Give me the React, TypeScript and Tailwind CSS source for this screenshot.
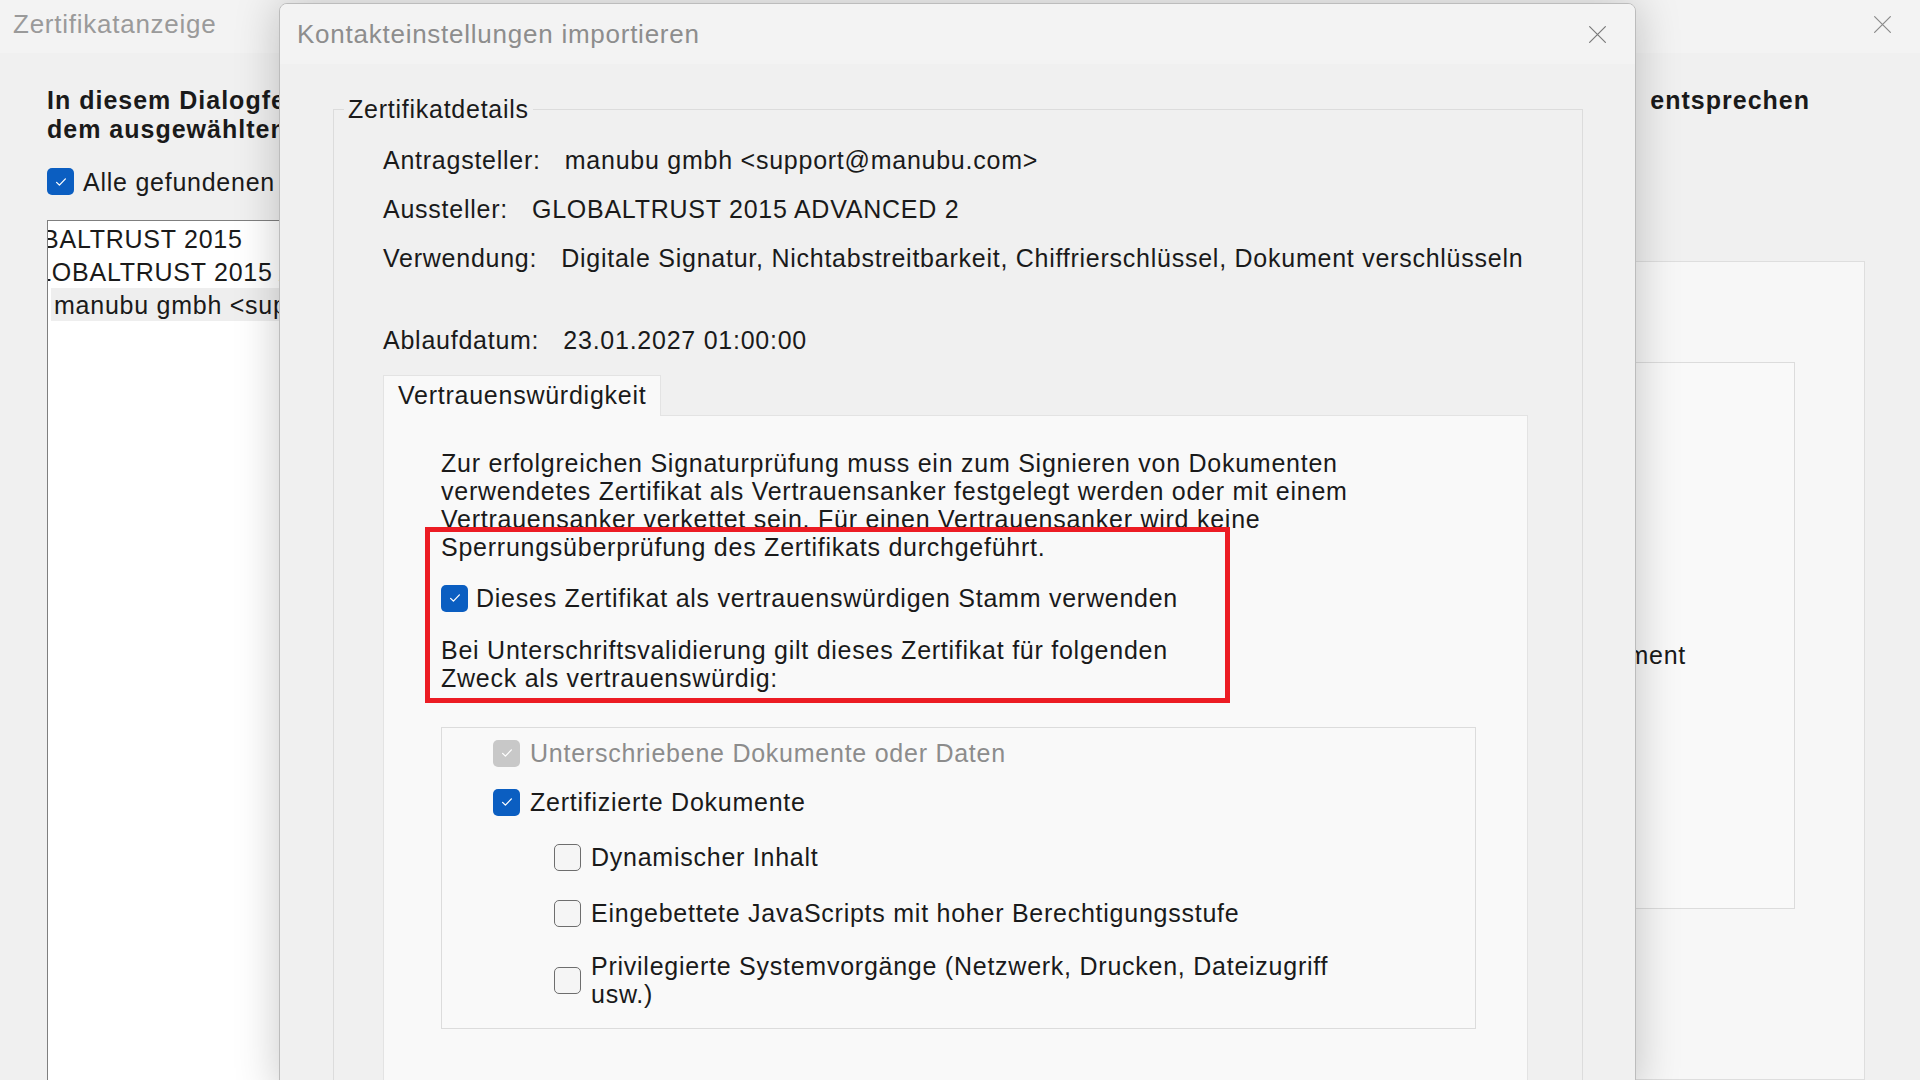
import React from 'react';

type CheckState = 'checked' | 'unchecked' | 'disabled';

function CloseIcon({ className }: { className?: string }) {
  return (
    <svg viewBox="0 0 24 24" className={className} fill="none">
      <path d="M3 3l18 18M21 3L3 21" stroke="currentColor" strokeWidth="1.4" strokeLinecap="round" />
    </svg>
  );
}

function Checkbox({ state }: { state: CheckState }) {
  if (state === 'unchecked') {
    return <span className="w-[27px] h-[27px] shrink-0 rounded-[5px] border-[1.5px] border-[#6e6e6e] bg-[#f5f5f5]" />;
  }
  const bg = state === 'checked' ? 'bg-[#0b5ec1]' : 'bg-[#c8c8c8]';
  return (
    <span className={`w-[27px] h-[27px] shrink-0 rounded-[5px] ${bg} flex items-center justify-center`}>
      <svg viewBox="0 0 16 16" className="w-[16px] h-[16px]" fill="none">
        <path d="M3.6 8.4l2.8 2.7 6-6.2" stroke="white" strokeWidth="1.3" strokeLinecap="round" strokeLinejoin="round" />
      </svg>
    </span>
  );
}

function CheckRow({ state, children, className = '' }: { state: CheckState; children: React.ReactNode; className?: string }) {
  return (
    <div className={`flex items-center gap-[10px] ${className}`}>
      <Checkbox state={state} />
      <span className={state === 'disabled' ? 'text-[#8c8c8c]' : ''}>{children}</span>
    </div>
  );
}

function DetailRow({ label, value, className = '' }: { label: string; value: string; className?: string }) {
  return (
    <div className={`flex gap-[24px] h-[28px] items-center ${className}`}>
      <span>{label}</span>
      <span>{value}</span>
    </div>
  );
}

export default function App() {
  return (
    <div className="relative w-[1920px] h-[1080px] overflow-hidden bg-[#f0f0f0] text-[#1a1a1a] [font-family:'Liberation_Sans',Arial,sans-serif] text-[25px] leading-[28px] tracking-[0.03em]">
      {/* Background window: Zertifikatanzeige */}
      <div className="flex flex-col h-full">
        <div className="h-[53px] shrink-0 bg-[#f3f3f3] flex items-center justify-between pl-[13px] pr-[27px] pb-[5px]">
          <span className="text-[26px] text-[#9a9a9a]">Zertifikatanzeige</span>
          <CloseIcon className="w-[21px] h-[21px] text-[#8a8a8a]" />
        </div>

        <div className="flex-1 flex flex-col pl-[47px] min-h-0">
          <div className="mt-[33px] font-bold text-[25px] leading-[29px] tracking-[0.04em]">
            <div className="flex justify-between w-[1763px]">
              <span>In diesem Dialogfeld können Sie die Zertifikatdetails anzeigen. Die Details</span>
              <span>entsprechen</span>
            </div>
            <div>dem ausgewählten Eintrag.</div>
          </div>

          <div className="flex flex-1 min-h-0 mt-[24px]">
            <div className="flex flex-col w-[640px]">
              <div className="flex items-center gap-[9px] h-[27px]">
                <Checkbox state="checked" />
                <span>Alle gefundenen Zertifizierungspfade anzeigen</span>
              </div>
              <div className="mt-[25px] flex-1 bg-white border-l border-t border-[#7f7f7f] overflow-hidden pt-[1px] whitespace-nowrap">
                <div className="h-[33px] flex items-center ml-[-61px]">GLOBALTRUST 2015</div>
                <div className="h-[33px] flex items-center ml-[-31px]">GLOBALTRUST 2015 ADVANCED 2</div>
                <div className="h-[33px] flex items-center ml-[3px] bg-[#eeeeee] pl-[3px]">manubu gmbh &lt;support@manubu.com&gt;</div>
              </div>
            </div>

            <div className="ml-auto mr-[55px] mt-[93px] w-[1100px] bg-[#f7f7f7] border border-[#dedede] flex flex-col">
              <div className="mt-[100px] ml-auto mr-[69px] w-[700px] h-[547px] border border-[#dcdcdc] bg-[#f9f9f9] flex flex-col justify-center">
                <span className="self-end mr-[108px] mt-[38px]">Zertifiziertes Dokument</span>
              </div>
            </div>
          </div>
        </div>
      </div>

      {/* Modal: Kontakteinstellungen importieren */}
      <div className="absolute left-[279px] top-[3px] w-[1357px] h-[1090px] flex flex-col rounded-t-[8px] border border-[#bcbcbc] bg-[#f0f0f0] shadow-[0_0_45px_rgba(0,0,0,0.22)] overflow-hidden">
        <div className="h-[60px] shrink-0 bg-[#f3f3f3] flex items-center justify-between pl-[17px] pr-[27px]">
          <span className="text-[26px] text-[#8d8d8d]">Kontakteinstellungen importieren</span>
          <CloseIcon className="w-[21px] h-[21px] text-[#7a7a7a]" />
        </div>

        <div className="flex-1 pl-[53px] pr-[52px]">
          <fieldset className="mt-[31px] w-[1250px] border border-[#dcdcdc] min-w-0 h-[1100px]">
            <legend className="ml-[10px] px-[4px]">Zertifikatdetails</legend>
            <div className="pl-[49px] pr-[54px]">
              <DetailRow className="mt-[23px]" label="Antragsteller:" value="manubu gmbh <support@manubu.com>" />
              <DetailRow className="mt-[21px]" label="Aussteller:" value="GLOBALTRUST 2015 ADVANCED 2" />
              <DetailRow
                className="mt-[21px]"
                label="Verwendung:"
                value="Digitale Signatur, Nichtabstreitbarkeit, Chiffrierschlüssel, Dokument verschlüsseln"
              />
              <DetailRow className="mt-[54px]" label="Ablaufdatum:" value="23.01.2027 01:00:00" />

              {/* Tab */}
              <div className="mt-[21px] relative z-10 -mb-px inline-flex h-[41px] items-start pt-[5px] px-[14px] bg-[#f9f9f9] border border-b-0 border-[#e3e3e3]">
                Vertrauenswürdigkeit
              </div>
              <div className="w-[1145px] h-[800px] bg-[#f9f9f9] border border-[#e3e3e3] pt-[33px] pl-[57px]">
                <p className="whitespace-nowrap">
                  Zur erfolgreichen Signaturprüfung muss ein zum Signieren von Dokumenten
                  <br />
                  verwendetes Zertifikat als Vertrauensanker festgelegt werden oder mit einem
                  <br />
                  Vertrauensanker verkettet sein. Für einen Vertrauensanker wird keine
                  <br />
                  Sperrungsüberprüfung des Zertifikats durchgeführt.
                </p>

                <div className="mt-[23px] flex items-center gap-[8px] h-[28px]">
                  <Checkbox state="checked" />
                  <span>Dieses Zertifikat als vertrauenswürdigen Stamm verwenden</span>
                </div>

                <p className="mt-[24px] whitespace-nowrap">
                  Bei Unterschriftsvalidierung gilt dieses Zertifikat für folgenden
                  <br />
                  Zweck als vertrauenswürdig:
                </p>

                <div className="mt-[35px] w-[1035px] h-[302px] border border-[#dcdcdc] bg-[#f9f9f9] pt-[11px] pl-[51px]">
                  <CheckRow state="disabled" className="h-[28px]">Unterschriebene Dokumente oder Daten</CheckRow>
                  <CheckRow state="checked" className="h-[28px] mt-[21px]">Zertifizierte Dokumente</CheckRow>
                  <CheckRow state="unchecked" className="h-[28px] mt-[27px] ml-[61px]">Dynamischer Inhalt</CheckRow>
                  <CheckRow state="unchecked" className="h-[28px] mt-[28px] ml-[61px]">
                    Eingebettete JavaScripts mit hoher Berechtigungsstufe
                  </CheckRow>
                  <CheckRow state="unchecked" className="mt-[25px] ml-[61px]">
                    Privilegierte Systemvorgänge (Netzwerk, Drucken, Dateizugriff
                    <br />
                    usw.)
                  </CheckRow>
                </div>
              </div>
            </div>
          </fieldset>
        </div>
      </div>

      {/* Red highlight annotation */}
      <div className="absolute left-[425px] top-[527px] w-[805px] h-[176px] border-[5px] border-[#ec1c24] pointer-events-none" />
    </div>
  );
}
